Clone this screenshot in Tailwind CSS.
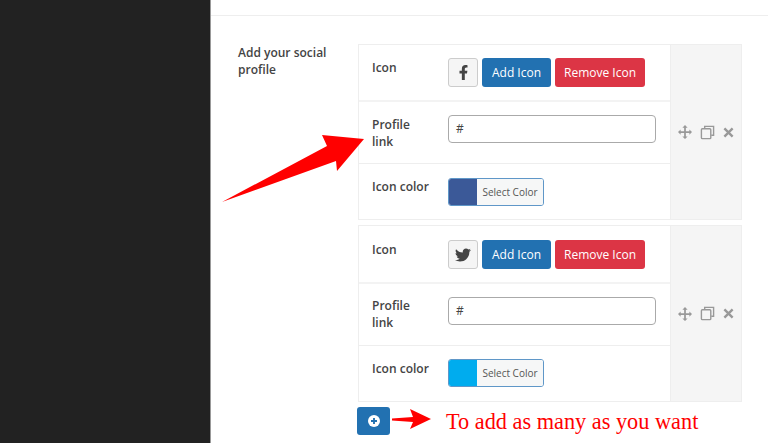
<!DOCTYPE html>
<html lang="en">

<head>
  <meta charset="UTF-8" />
  <meta name="viewport" content="width=device-width, initial-scale=1.0" />
  <title>Social profile</title>
  <script src="https://cdn.jsdelivr.net/npm/@tailwindcss/browser@4"></script>
</head>

<body class="relative h-[443px] w-[768px] overflow-hidden bg-white font-['Open_Sans',sans-serif] text-[#444]">
  <div class="flex h-[443px]">
    <aside class="w-[211px] shrink-0 border-r border-[#999] bg-[#222]"></aside>

    <main class="flex-1">
      <div class="h-4 border-b border-[#eee]"></div>

      <section class="flex pt-7 pl-[27px]">
        <div class="w-[120px] shrink-0 text-[12px] leading-[17px] font-[550]">Add your social<br />profile</div>

        <div class="w-[384px]">
          <!-- facebook -->
          <div class="flex h-[176px] border border-[#eee]">
            <div class="w-[311px] shrink-0 bg-white">
              <div class="flex h-[57px] border-b-2 border-[#f3f3f3] pl-[13px]">
                <div class="w-[76px] pt-[14px] text-[12px] leading-[17px] font-[550]">Icon</div>
                <div class="flex gap-1 pt-[13px]">
                  <span class="flex h-[29px] w-[30px] items-center justify-center rounded-[3px] border border-[#ccc] bg-[#f5f5f5]">
                    <svg viewBox="0 0 320 512" class="h-[15px] w-[15px] fill-[#444]"><path d="M279 288l14-93h-89v-60c0-25 12-50 52-50h41V6s-37-6-72-6c-73 0-121 44-121 125v70H23v93h81v224h100V288z" /></svg>
                  </span>
                  <span class="flex h-[29px] w-[69px] items-center justify-center rounded-[3px] bg-[#2271b1] pt-px text-[12px] text-white">Add Icon</span>
                  <span class="flex h-[29px] w-[90px] items-center justify-center rounded-[3px] bg-[#dc3545] pt-px text-[12px] text-white">Remove Icon</span>
                </div>
              </div>
              <div class="flex h-[62px] border-b border-[#eee] pl-[13px]">
                <div class="w-[76px] pt-[14px] text-[12px] leading-[17px] font-[550]">Profile<br />link</div>
                <div class="pt-[13px]">
                  <div class="flex h-[28px] w-[208px] items-center rounded-[4px] border border-[#aaa] bg-white pl-[7px] text-[12px]">#</div>
                </div>
              </div>
              <div class="flex h-[55px] pl-[13px]">
                <div class="w-[76px] pt-[14px] text-[12px] leading-[17px] font-[550]">Icon color</div>
                <div class="pt-[14px]">
                  <div class="flex h-[28px] w-[96px] overflow-hidden rounded-[3px] border border-[#5f97c8]">
                    <span class="w-[28px] bg-[#3b5998]"></span>
                    <span class="flex flex-1 items-center justify-center bg-[#f6f7f7] text-[10px] text-[#555]">Select Color</span>
                  </div>
                </div>
              </div>
            </div>
            <div class="flex flex-1 items-center justify-center gap-2 border-l border-[#eee] bg-[#f5f5f5]">
              <svg viewBox="0 0 16 16" class="h-[14px] w-[14px] fill-[#999]"><path d="M8 0l3 3H9v4h4V5l3 3-3 3V9H9v4h2l-3 3-3-3h2V9H3v2L0 8l3-3v2h4V3H5z" /></svg>
              <svg viewBox="0 0 16 16" class="h-[15px] w-[15px] fill-none stroke-[#999] stroke-[1.5]"><path d="M5 4V1.500h9.500V11H12" /><rect x="1.500" y="4" width="10" height="10.500" rx="1" /></svg>
              <svg viewBox="0 0 16 16" class="h-[11px] w-[11px] stroke-[#999] stroke-[3.500]"><path d="M2 2l12 12M14 2L2 14" /></svg>
            </div>
          </div>

          <!-- twitter -->
          <div class="mt-[5px] flex h-[177px] border border-[#eee]">
            <div class="w-[311px] shrink-0 bg-white">
              <div class="flex h-[58px] border-b-2 border-[#f3f3f3] pl-[13px]">
                <div class="w-[76px] pt-[15px] text-[12px] leading-[17px] font-[550]">Icon</div>
                <div class="flex gap-1 pt-[14px]">
                  <span class="flex h-[29px] w-[30px] items-center justify-center rounded-[3px] border border-[#ccc] bg-[#f5f5f5]">
                    <svg viewBox="0 0 512 512" class="h-[16px] w-[16px] fill-[#444]"><path d="M459 152c0 5 0 9 0 14 0 139-106 299-299 299-59 0-115-17-161-47 8 1 16 1 25 1 49 0 94-17 130-45-46-1-85-31-98-73 6 1 13 2 20 2 9 0 19-1 28-4-48-10-84-52-84-103v-1c14 8 30 13 47 13-28-19-47-51-47-87 0-20 5-37 14-53 52 64 129 105 216 110-2-8-3-16-3-24 0-58 47-105 105-105 30 0 58 13 77 33 24-5 47-14 67-26-8 25-24 46-46 59 21-2 42-8 61-16-14 21-32 39-52 54z" /></svg>
                  </span>
                  <span class="flex h-[29px] w-[69px] items-center justify-center rounded-[3px] bg-[#2271b1] pt-px text-[12px] text-white">Add Icon</span>
                  <span class="flex h-[29px] w-[90px] items-center justify-center rounded-[3px] bg-[#dc3545] pt-px text-[12px] text-white">Remove Icon</span>
                </div>
              </div>
              <div class="flex h-[62px] border-b border-[#eee] pl-[13px]">
                <div class="w-[76px] pt-[13px] text-[12px] leading-[17px] font-[550]">Profile<br />link</div>
                <div class="pt-[13px]">
                  <div class="flex h-[28px] w-[208px] items-center rounded-[4px] border border-[#aaa] bg-white pl-[7px] text-[12px]">#</div>
                </div>
              </div>
              <div class="flex h-[55px] pl-[13px]">
                <div class="w-[76px] pt-[14px] text-[12px] leading-[17px] font-[550]">Icon color</div>
                <div class="pt-[13px]">
                  <div class="flex h-[28px] w-[96px] overflow-hidden rounded-[3px] border border-[#5f97c8]">
                    <span class="w-[28px] bg-[#00acee]"></span>
                    <span class="flex flex-1 items-center justify-center bg-[#f6f7f7] text-[10px] text-[#555]">Select Color</span>
                  </div>
                </div>
              </div>
            </div>
            <div class="flex flex-1 items-center justify-center gap-2 border-l border-[#eee] bg-[#f5f5f5]">
              <svg viewBox="0 0 16 16" class="h-[14px] w-[14px] fill-[#999]"><path d="M8 0l3 3H9v4h4V5l3 3-3 3V9H9v4h2l-3 3-3-3h2V9H3v2L0 8l3-3v2h4V3H5z" /></svg>
              <svg viewBox="0 0 16 16" class="h-[15px] w-[15px] fill-none stroke-[#999] stroke-[1.5]"><path d="M5 4V1.500h9.500V11H12" /><rect x="1.500" y="4" width="10" height="10.500" rx="1" /></svg>
              <svg viewBox="0 0 16 16" class="h-[11px] w-[11px] stroke-[#999] stroke-[3.500]"><path d="M2 2l12 12M14 2L2 14" /></svg>
            </div>
          </div>

          <div class="mt-[5px] flex items-center">
            <span class="-ml-px flex h-[28px] w-[33px] items-center justify-center rounded-[3px] bg-[#2271b1]">
              <svg viewBox="0 0 16 16" class="h-[12px] w-[12px]"><circle cx="8" cy="8" r="8" fill="#fff" /><path d="M8 4v8M4 8h8" stroke="#2271b1" stroke-width="2.500" /></svg>
            </span>
            <span class="ml-[56px] font-['Liberation_Serif',serif] text-[22.3px] leading-[27px] whitespace-nowrap text-[#f00]">To add as many as you want</span>
          </div>
        </div>
      </section>
    </main>
  </div>

  <!-- red annotation arrows -->
  <svg class="absolute top-0 left-0 h-[443px] w-[768px]" viewBox="0 0 768 443" fill="#f00">
    <path d="M222 202L327 146L322 135L364 139L337 171L336 161Z" />
    <path d="M392 418.500L413 417L410 409L431 419L410 429L413 422L392 420.500Z" />
  </svg>
</body>

</html>
